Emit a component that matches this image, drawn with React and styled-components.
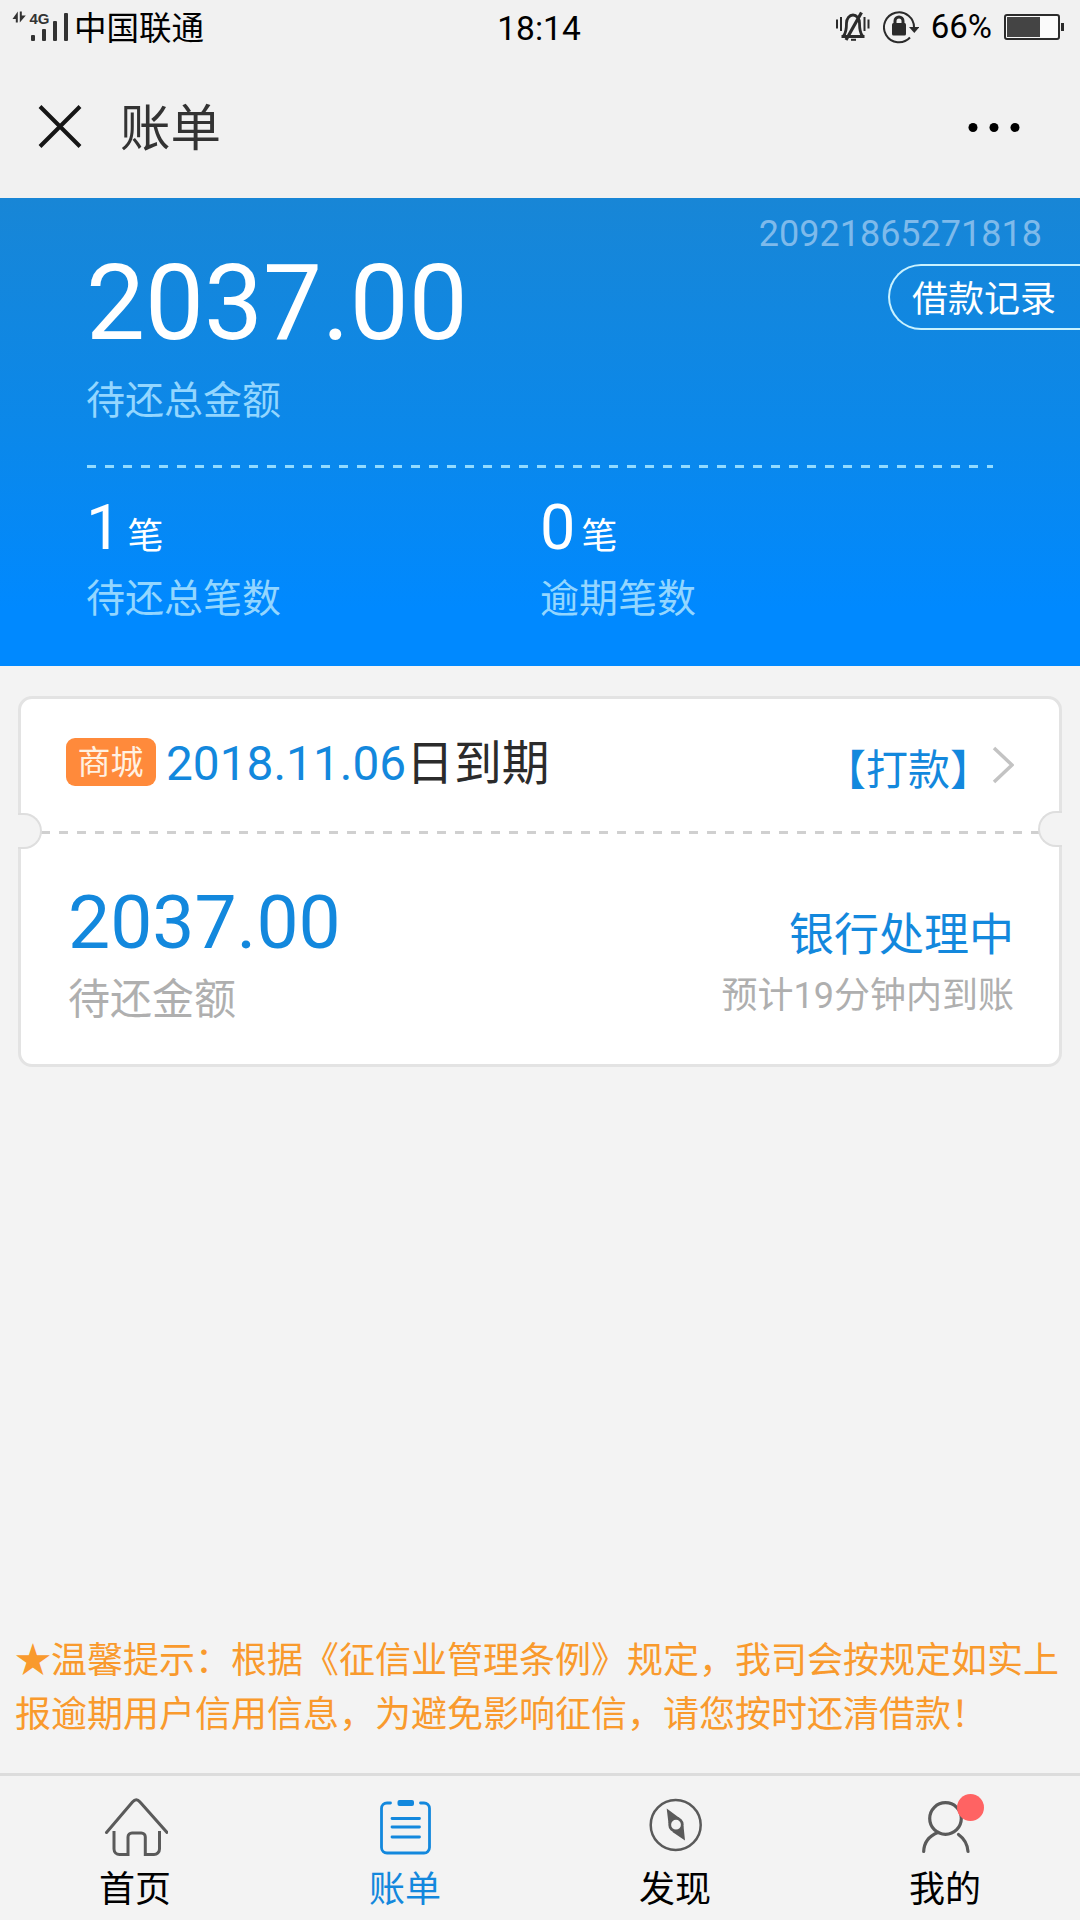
import React, {useState} from "react";
import styled, {createGlobalStyle} from "styled-components";

const BLUE = "#1388dd";

const GlobalStyle = createGlobalStyle`
    * {
      box-sizing: border-box;
    }
    body {
      margin: 0;
      background-color: #f3f3f3;
      font-family: Roboto, "Noto Sans CJK SC", sans-serif;
    }
    svg {
      display: block;
      flex: none;
    }
`;

const Page = styled.div`
      display: flex;
      flex-direction: column;
      width: 1080px;
      height: 1920px;
      overflow: hidden;
      background-color: #f3f3f3;
    `;

/* Top bars */

const StatusBar = styled.div`
      display: grid;
      grid-template-columns: 1fr auto 1fr;
      align-items: start;
      height: 56px;
      padding: 6px 16px 0 12px;
      background-color: #f1f1f1;
      color: #000;
      font-size: 33px;
      line-height: 42px;
    `;

const StatusGroup = styled.div`
      display: flex;
      align-items: center;
      justify-content: ${props => props.$end ? "flex-end" : "flex-start"};
      gap: ${props => props.$gap}px;
      height: 42px;
    `;

const Carrier = styled.span`
      padding-top: 3px;
      font-size: 32.5px;
    `;

const Clock = styled.span`
      padding: 2px 0 0 2px;
      font-size: 33.5px;
    `;

const NavBar = styled.div`
      display: flex;
      align-items: center;
      height: 142px;
      padding: 0 60px 0 38px;
      background-color: #f1f1f1;
    `;

const NavTitle = styled.h1`
      flex: 1;
      margin: 3px 0 0 38px;
      color: #333;
      font-size: 50.5px;
      font-weight: 400;
      line-height: 60px;
    `;

/* Blue summary */

const Summary = styled.section`
      height: 468px;
      background: linear-gradient(#1886d6, #0b88ea 50%, #0089ff 88%);
      color: #fff;
    `;

const SummaryTop = styled.div`
      display: flex;
      justify-content: space-between;
      height: 267px;
      padding-left: 86px;
    `;

const Total = styled.div`
      padding-top: 52px;
    `;

const TotalAmount = styled.div`
      margin-bottom: 16px;
      font-size: 105px;
      line-height: 108px;
    `;

const SummaryLabel = styled.div`
      color: #93d6ff;
      font-size: 39px;
      line-height: 54px;
    `;

const SummarySide = styled.div`
      display: flex;
      flex-direction: column;
      align-items: flex-end;
      padding-top: 15px;
    `;

const AccountNumber = styled.div`
      margin-bottom: 9px;
      padding-right: 38px;
      color: #7ebaeb;
      font-size: 36px;
      line-height: 42px;
    `;

const RecordsButton = styled.button`
      width: 192px;
      height: 66px;
      padding: 5px 0 0 22px;
      border: 2px solid #c9f2ff;
      border-right: 0;
      border-radius: 33px 0 0 33px;
      background: none;
      color: #fff;
      font-family: inherit;
      font-size: 36px;
      line-height: 56px;
      text-align: left;
    `;

const DashedLine = styled.div`
      height: 3px;
      margin: ${props => props.$margin};
      background: repeating-linear-gradient(90deg, ${props => props.$color} 0 9px, transparent 9px 18px);
    `;

const Counts = styled.div`
      display: grid;
      grid-template-columns: 454px 1fr;
      padding: 22px 87px 0 86px;
    `;

const CountNumber = styled.div`
      height: 75px;
      margin-bottom: 7px;
      font-size: 63px;
      line-height: 75px;
    `;

const CountUnit = styled.span`
      margin-left: 6px;
      font-size: 36px;
      line-height: 1;
    `;

/* Bill ticket */

const Ticket = styled.section`
      position: relative;
      height: 371px;
      margin: 30px 18px 0;
      border: 3px solid #e3e3e3;
      border-radius: 14px;
      background-color: #fff;
    `;

const TicketHead = styled.div`
      display: flex;
      align-items: center;
      height: 132px;
      padding: 0 45px 0 45px;
    `;

const Tag = styled.span`
      width: 90px;
      height: 48px;
      margin: -6px 10px 0 0;
      padding: 3px 1px 0 0;
      border-radius: 9px;
      background-color: #ff8a3b;
      color: #fff1e2;
      font-size: 33px;
      line-height: 44px;
      text-align: center;
    `;

const DueDate = styled.div`
      flex: 1;
      margin-top: -2px;
      color: #2b2b2b;
      font-size: 47.8px;
      line-height: 60px;
    `;

const Blue = styled.span`
      color: ${BLUE};
    `;

const Action = styled.div`
      margin: 12px 0 0;
      color: ${BLUE};
      font-size: 42px;
      line-height: 60px;
    `;

const TicketBody = styled.div`
      display: flex;
      justify-content: space-between;
      padding: 43px 45px 0 47px;
    `;

const Amount = styled.div`
      margin-bottom: 3px;
      color: ${BLUE};
      font-size: 75px;
      line-height: 90px;
    `;

const State = styled.div`
      padding-top: 29px;
      color: ${BLUE};
      font-size: 45px;
      line-height: 60px;
      text-align: right;
    `;

const Hint = styled.div`
      color: #afafaf;
      font-size: ${props => props.$size}px;
      line-height: 60px;
    `;

// half circles punched out of both edges of the ticket
const Notch = styled.i`
      position: absolute;
      top: ${props => props.$right ? 112 : 114}px;
      ${props => props.$right ? "right: -3px;" : "left: -3px;"}
      width: 24px;
      height: 36px;
      border: 2px solid #dedede;
      border-${props => props.$right ? "right" : "left"}: 0;
      border-radius: ${props => props.$right ? "18px 0 0 18px" : "0 18px 18px 0"};
      background-color: #f3f3f3;
    `;

/* Bottom part */

const Notice = styled.p`
      margin: auto 17px 31px 15px;
      color: #f99a2d;
      font-size: 36px;
      line-height: 54px;
      white-space: nowrap;
    `;

const TabBar = styled.nav`
      display: grid;
      grid-template-columns: repeat(4, 1fr);
      height: 147px;
      border-top: 3px solid #dcdcdc;
    `;

const Tab = styled.a`
      display: flex;
      flex-direction: column;
      align-items: center;
      padding-top: 18px;
      color: ${props => props.$active ? BLUE : "#000"};
      font-size: 36px;
      line-height: 54px;
    `;

const TabIcon = styled.span`
      position: relative;
      width: 66px;
      height: 66px;
      margin-bottom: 3px;
      color: ${props => props.$active ? BLUE : "#5a5a5a"};
    `;

const Dot = styled.i`
      position: absolute;
      top: 0;
      left: 45px;
      width: 27px;
      height: 27px;
      border-radius: 50%;
      background-color: #ff6363;
    `;

const Signal = () => (
    <svg width="58" height="34" viewBox="0 0 58 34" fill="#333">
        <path d="M5.800 1.500V12.500H3.800V9H.5zM7.800 12.500V1.500H9.800V5.500H13.800z"/>
        <text x="17.500" y="14" fontFamily="Liberation Sans" fontWeight="bold" fontSize="15">4G</text>
        <rect x="19" y="25" width="4" height="6" rx="1"/>
        <rect x="30" y="19" width="4" height="12" rx="1"/>
        <rect x="41" y="11" width="4" height="20" rx="1"/>
        <rect x="52" y="3" width="4" height="28" rx="1"/>
    </svg>
);

const Muted = () => (
    <svg width="36" height="32" viewBox="0 0 36 32" fill="none" stroke="#2b2b2b">
        <path strokeWidth="2" d="M2 8.500v9M6 6v14M29.500 6v14M33.500 8.500v9"/>
        <path strokeWidth="2.800" d="M6.500 25.500h23M8.500 25c2.500-3 3-6 3-13a6.500 8 0 0 1 13 0c0 7 .5 10 3 13"/>
        <path strokeWidth="3.200" d="M11 29 26.500 1.500"/>
        <path strokeWidth="2" d="M16 28.800h5"/>
    </svg>
);

const RotationLock = () => (
    <svg width="36" height="34" viewBox="0 0 36 34" fill="none" stroke="#2b2b2b" strokeWidth="2">
        <path d="M31 18A15 15 0 1 0 27 27.500"/>
        <path d="M26 17h10.500l-5.200 6z" fill="#2b2b2b" stroke="none"/>
        <path d="M12 14v-3a4 4 0 0 1 8 0v3" strokeWidth="3"/>
        <rect x="9" y="13" width="14" height="12.500" rx="1.500" fill="#2b2b2b" stroke="none"/>
    </svg>
);

const Battery = () => (
    <svg width="60" height="26" viewBox="0 0 60 26">
        <rect x="1" y="1" width="54" height="24" rx="2" fill="#fafafa" stroke="#2b2b2b" strokeWidth="2"/>
        <rect x="3" y="3" width="33" height="20" fill="#444"/>
        <rect x="57" y="9" width="3" height="8" fill="#2b2b2b"/>
    </svg>
);

const Close = () => (
    <svg width="44" height="44" viewBox="0 0 44 44" stroke="#161616" strokeWidth="4">
        <path d="M2 1.500 42 41.500M42 1.500 2 41.500"/>
    </svg>
);

const More = () => (
    <svg width="52" height="10" viewBox="0 0 52 10">
        <circle cx="5" cy="5.500" r="4.500"/>
        <circle cx="26" cy="5.500" r="4.500"/>
        <circle cx="47" cy="5.500" r="4.500"/>
    </svg>
);

const Chevron = () => (
    <svg width="22" height="38" viewBox="0 0 22 38" fill="none" stroke="#c3c3c3" strokeWidth="3.500">
        <path d="M2 2 20 19 2 36"/>
    </svg>
);

const HomeIcon = () => (
    <svg width="66" height="66" viewBox="0 0 66 66" fill="none" stroke="currentColor" strokeWidth="3">
        <path d="M4.500 38.500 30.500 8Q34.300 3.500 38 8L65 38.500" strokeLinecap="round"/>
        <path d="M12 37v18a5.500 5.500 0 0 0 5.500 5.500H26V43a4 4 0 0 1 4-4h9.300a4 4 0 0 1 4 4v17.500h8.700a5.500 5.500 0 0 0 5.500-5.500V37"/>
    </svg>
);

const BillIcon = () => (
    <svg width="66" height="66" viewBox="0 0 66 66" fill="none" stroke="currentColor" strokeWidth="2.800" strokeLinecap="round">
        <path d="M18.500 9H15a5.500 5.500 0 0 0-5.500 5.500v39A5.500 5.500 0 0 0 15 59h37a5.500 5.500 0 0 0 5.500-5.500v-39A5.500 5.500 0 0 0 52 9h-3.500"/>
        <path d="M20 24.500h27.500M20 33h27.500M20 43h27.500"/>
        <rect x="25.500" y="6" width="16.500" height="6" rx="2" fill="currentColor" stroke="none"/>
    </svg>
);

const FindIcon = () => (
    <svg width="66" height="66" viewBox="0 0 66 66" fill="none" stroke="currentColor" strokeWidth="2.500">
        <circle cx="33.700" cy="31" r="25"/>
        <path d="M24.700 14.500 37.500 24 26.500 29.500zM43 46.500 30.500 38 41.500 32z" fill="currentColor" stroke="none"/>
        <circle cx="34" cy="30.700" r="6.300" fill="#f3f3f3" strokeWidth="2.800"/>
    </svg>
);

const MineIcon = () => (
    <svg width="66" height="66" viewBox="0 0 66 66" fill="none" stroke="currentColor" strokeWidth="3.200">
        <circle cx="33.500" cy="24.500" r="15.800"/>
        <path d="M26 38.500C17 42 12 49 11.700 57.500M46.500 40.500C52 44.500 55.500 50.500 56 57.500" strokeLinecap="round"/>
    </svg>
);

const tabs = [
    {key: "home", label: "首页", Icon: HomeIcon},
    {key: "bill", label: "账单", Icon: BillIcon},
    {key: "find", label: "发现", Icon: FindIcon},
    {key: "mine", label: "我的", Icon: MineIcon, hasNews: true},
];

const counts = [
    {label: "待还总笔数", value: 1},
    {label: "逾期笔数", value: 0},
];

export default function App() {
    const [activeTab, setActiveTab] = useState("bill");

    function renderTabs() {
        return tabs.map(({key, label, Icon, hasNews}) => (
            <Tab key={key} $active={activeTab === key} onClick={() => setActiveTab(key)}>
                <TabIcon $active={activeTab === key}>
                    <Icon/>
                    {hasNews ? <Dot/> : ""}
                </TabIcon>
                {label}
            </Tab>
        ));
    }

    return (
        <Page>
            <GlobalStyle/>
            <StatusBar>
                <StatusGroup $gap={4}>
                    <Signal/>
                    <Carrier>中国联通</Carrier>
                </StatusGroup>
                <Clock>18:14</Clock>
                <StatusGroup $end $gap={12}>
                    <Muted/>
                    <RotationLock/>
                    <span>66%</span>
                    <Battery/>
                </StatusGroup>
            </StatusBar>
            <NavBar>
                <Close/>
                <NavTitle>账单</NavTitle>
                <More/>
            </NavBar>

            <Summary>
                <SummaryTop>
                    <Total>
                        <TotalAmount>2037.00</TotalAmount>
                        <SummaryLabel>待还总金额</SummaryLabel>
                    </Total>
                    <SummarySide>
                        <AccountNumber>20921865271818</AccountNumber>
                        <RecordsButton>借款记录</RecordsButton>
                    </SummarySide>
                </SummaryTop>
                <DashedLine $color="#93dbff" $margin="0 87px"/>
                <Counts>
                    {counts.map(count => (
                        <div key={count.label}>
                            <CountNumber>{count.value}<CountUnit>笔</CountUnit></CountNumber>
                            <SummaryLabel>{count.label}</SummaryLabel>
                        </div>
                    ))}
                </Counts>
            </Summary>

            <Ticket>
                <TicketHead>
                    <Tag>商城</Tag>
                    <DueDate><Blue>2018.11.06</Blue>日到期</DueDate>
                    <Action>【打款】</Action>
                    <Chevron/>
                </TicketHead>
                <DashedLine $color="#d0d0d0" $margin="0 18px 0 20px"/>
                <Notch/>
                <Notch $right/>
                <TicketBody>
                    <div>
                        <Amount>2037.00</Amount>
                        <Hint $size={42}>待还金额</Hint>
                    </div>
                    <div>
                        <State>银行处理中</State>
                        <Hint $size={36}>预计19分钟内到账</Hint>
                    </div>
                </TicketBody>
            </Ticket>

            <Notice>
                ★温馨提示：根据《征信业管理条例》规定，我司会按规定如实上
                <br/>
                报逾期用户信用信息，为避免影响征信，请您按时还清借款！
            </Notice>
            <TabBar>{renderTabs()}</TabBar>
        </Page>
    );
}
